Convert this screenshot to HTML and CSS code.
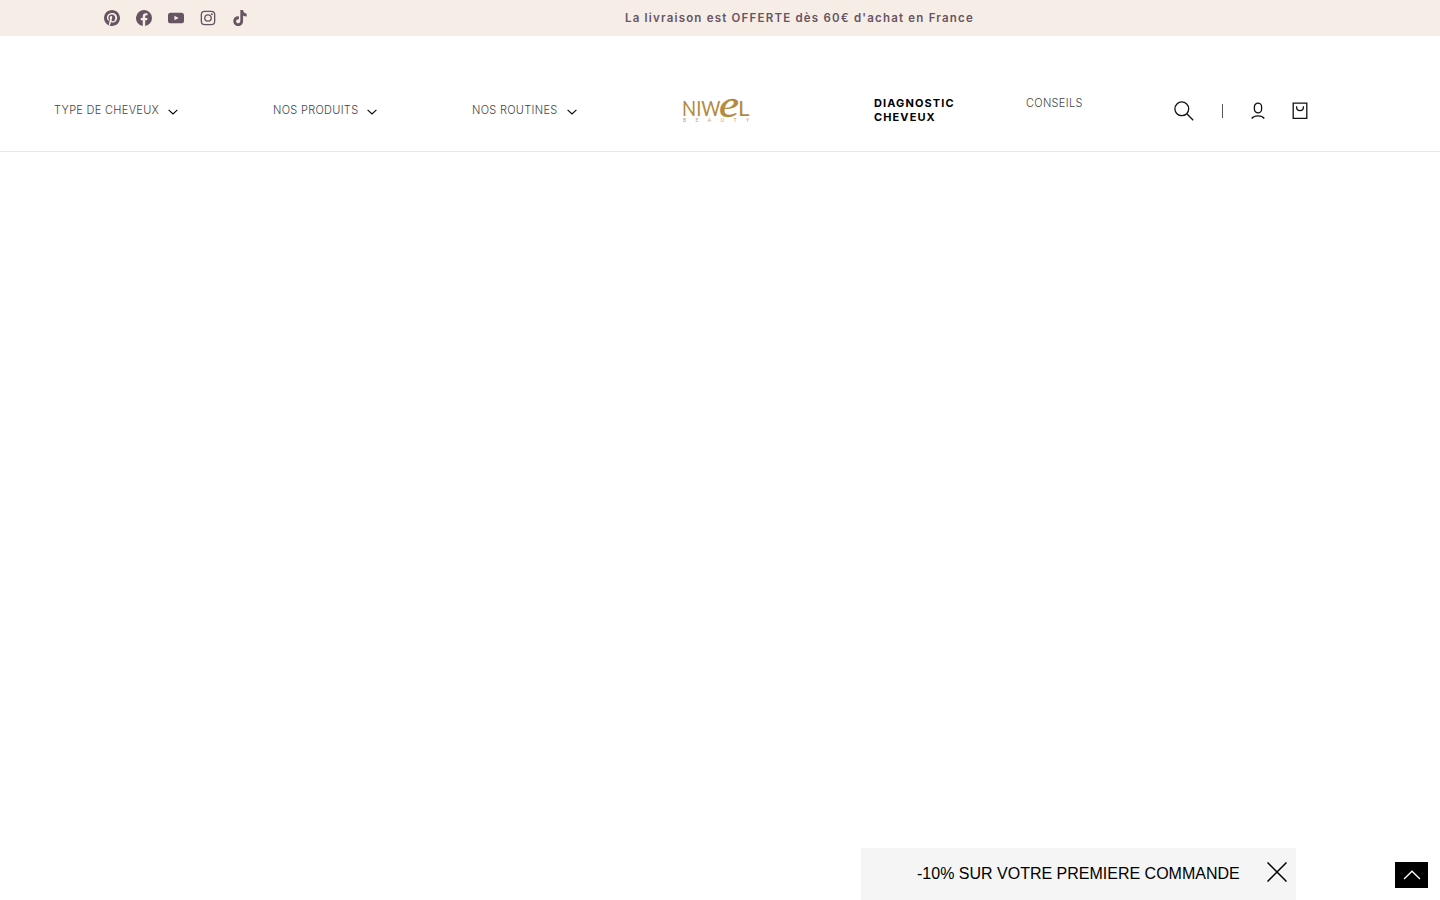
FILE: index.html
```html
<!DOCTYPE html>
<html lang="fr">
<head>
<meta charset="UTF-8">
<meta name="viewport" content="width=device-width, initial-scale=1.0">
<title>Niwel Beauty</title>
<link rel="stylesheet" href="styles.css">
</head>
<body>
  <div class="announcement-bar">
    <div class="social">
      <a href="#" aria-label="Pinterest"><svg viewBox="0 0 24 24"><path d="M12 0C5.4 0 0 5.4 0 12c0 5.1 3.200 9.400 7.600 11.200-.1-.9-.2-2.400 0-3.400l1.400-6s-.4-.7-.4-1.800c0-1.700 1-2.900 2.200-2.900 1 0 1.500.8 1.500 1.700 0 1-.7 2.600-1 4-.3 1.200.6 2.200 1.800 2.200 2.100 0 3.800-2.200 3.800-5.500 0-2.900-2.100-4.900-5-4.900-3.400 0-5.400 2.600-5.400 5.200 0 1 .4 2.100.9 2.700.1.100.1.200.1.300l-.3 1.400c-.1.200-.2.300-.4.200-1.500-.7-2.400-2.900-2.400-4.600 0-3.800 2.800-7.300 7.900-7.300 4.200 0 7.400 3 7.400 6.900 0 4.100-2.600 7.500-6.200 7.500-1.200 0-2.400-.6-2.800-1.400l-.7 2.900c-.3 1-1 2.300-1.500 3.100 1.100.3 2.300.5 3.500.5 6.600 0 12-5.400 12-12S18.600 0 12 0z"/></svg></a>
      <a href="#" aria-label="Facebook"><svg viewBox="0 0 24 24"><path d="M24 12a12 12 0 1 0-13.900 11.900v-8.400h-3V12h3V9.400c0-3 1.800-4.700 4.500-4.700 1.300 0 2.700.2 2.700.2v3h-1.500c-1.500 0-2 .9-2 1.900V12h3.400l-.6 3.500h-2.800v8.400A12 12 0 0 0 24 12z"/></svg></a>
      <a href="#" aria-label="YouTube"><svg viewBox="0 0 24 24"><path fill-rule="evenodd" d="M4 4h16c2.700 0 4 1.300 4 4v8c0 2.700-1.300 4-4 4H4c-2.700 0-4-1.300-4-4V8c0-2.700 1.300-4 4-4zm5.600 4.500v7L16 12z"/></svg></a>
      <a href="#" aria-label="Instagram"><svg viewBox="0 0 24 24"><g fill="none" stroke="currentColor" stroke-width="2"><rect x="2" y="2" width="20" height="20" rx="5"/><circle cx="12" cy="12" r="4.800"/></g><circle cx="17.800" cy="6.200" r="1.400"/></svg></a>
      <a href="#" aria-label="TikTok"><svg viewBox="0 0 24 24"><path d="M12.500 0h4.100c.3 3.200 2.300 5.300 5.400 5.600v4.200c-2 0-3.900-.6-5.400-1.700v8.300c0 4.600-3.200 7.600-7.300 7.600C5 24 2 20.700 2 16.800c0-4.500 3.700-7.700 8.400-7.200v4.300c-2.300-.6-4.200.7-4.200 2.800 0 1.800 1.400 3.100 3.100 3.100 2 0 3.200-1.300 3.200-3.600z"/></svg></a>
    </div>
    <p class="announcement">La livraison est OFFERTE dès 60€ d'achat en France</p>
  </div>

  <header class="header">
    <a class="menu-item" href="#"><span>TYPE DE CHEVEUX</span><svg class="caret" viewBox="0 0 10 6"><path d="M.6.8 5 5 9.400.8"/></svg></a>
    <a class="menu-item" href="#"><span>NOS PRODUITS</span><svg class="caret" viewBox="0 0 10 6"><path d="M.6.8 5 5 9.400.8"/></svg></a>
    <a class="menu-item" href="#"><span>NOS ROUTINES</span><svg class="caret" viewBox="0 0 10 6"><path d="M.6.8 5 5 9.400.8"/></svg></a>
    <a class="logo" href="#" aria-label="Niwel Beauty">
      <svg viewBox="0 0 66 26">
        <text class="logo-name" x="-1" y="18" textLength="38.500" lengthAdjust="spacingAndGlyphs">NIW</text>
        <text class="logo-e" x="36" y="18.500" textLength="20" lengthAdjust="spacingAndGlyphs">e</text>
        <text class="logo-name" x="55" y="18" textLength="11.500" lengthAdjust="spacingAndGlyphs">L</text>
        <text class="logo-sub" x="0" y="24" textLength="66">BEAUTY</text>
      </svg>
    </a>
    <a class="menu-link strong" href="#">DIAGNOSTIC<br>CHEVEUX</a>
    <a class="menu-link" href="#">CONSEILS</a>
    <div class="header-icons">
      <a href="#" aria-label="Recherche"><svg class="icon-search" viewBox="0 0 20 20"><circle cx="7.800" cy="7.800" r="6.900"/><path d="m12.800 12.800 6.400 6.400"/></svg></a>
      <span class="separator"></span>
      <a href="#" aria-label="Compte"><svg class="icon-account" viewBox="0 0 14 18"><rect x="3.400" y="1.200" width="7.200" height="9.600" rx="3.600"/><path d="M.7 16.500c1.400-1.700 3.600-2.600 6.300-2.600s4.900.9 6.300 2.600"/></svg></a>
      <a href="#" aria-label="Panier"><svg class="icon-cart" viewBox="0 0 16 18"><path d="M1.200 1.200h13.600v15.100H1.200zM4.600 4.200v1a3.400 3.400 0 0 0 6.800 0v-1"/></svg></a>
    </div>
  </header>

  <main></main>

  <div class="promo">
    <span>-10% SUR VOTRE PREMIERE COMMANDE</span>
    <button class="promo-close" aria-label="Fermer"><svg viewBox="0 0 20 20"><path d="m.5.5 19 19m0-19-19 19"/></svg></button>
  </div>
  <a class="back-to-top" href="#" aria-label="Haut de page"><svg viewBox="0 0 18 10"><path d="m1 9 8-7.800L17 9"/></svg></a>
</body>
</html>
```
FILE: styles.css
```css
* {
  box-sizing: border-box;
  margin: 0;
  padding: 0;
}
body {
  background: #fff;
  color: #121212;
  font-family: Inter, "Liberation Sans", sans-serif;
}
a {
  color: inherit;
  text-decoration: none;
}
svg {
  display: block;
}

.announcement-bar {
  display: flex;
  align-items: center;
  height: 36px;
  padding-left: 104px;
  background: #f5ede6;
  color: #675462;
}
.social {
  display: flex;
  gap: 16px;
  width: 521px;
}
.social svg {
  width: 16px;
  height: 16px;
  fill: currentColor;
}
.announcement {
  font-size: 11.500px;
  font-weight: 600;
  letter-spacing: 1.200px;
  line-height: 16px;
  white-space: nowrap;
}

.header {
  display: grid;
  grid-template-columns: 219px 199px 211px 191px 152px 148px auto;
  height: 116px;
  padding: 60px 0 0 54px;
  border-bottom: 1px solid #e8e8e8;
}
.menu-item,
.menu-link {
  height: 30px;
  color: #444;
  font-size: 11px;
  font-weight: 300;
  letter-spacing: .3px;
  line-height: 14px;
  white-space: nowrap;
}
.menu-item {
  display: flex;
  align-items: center;
  gap: 9px;
}
.menu-item span {
  margin-top: -2px;
}
.menu-link.strong {
  color: #000;
  font-weight: 700;
  letter-spacing: 1.100px;
}
.caret {
  width: 10px;
  height: 6px;
  margin-top: 2px;
  fill: none;
  stroke: #000;
  stroke-width: 1.100;
}
.logo svg {
  width: 66px;
  height: 26px;
  margin-top: 2px;
  overflow: visible;
}
.logo-name {
  fill: #b38a3e;
  font-family: Lato, sans-serif;
  font-size: 22px;
}
.logo-e {
  fill: #b38a3e;
  stroke: #b38a3e;
  stroke-width: .4;
  font-family: "Liberation Serif", serif;
  font-size: 37px;
  font-style: italic;
}
.logo-sub {
  fill: #c4a468;
  font-family: Lato, sans-serif;
  font-size: 5px;
}
.header-icons {
  display: flex;
  align-items: center;
  height: 30px;
}
.header-icons svg {
  fill: none;
  stroke: #121212;
  stroke-width: 1.300;
}
.icon-search {
  width: 20px;
  height: 20px;
}
.separator {
  width: 1px;
  height: 14px;
  margin: 0 28px;
  background: #555;
}
.icon-account {
  width: 14px;
  height: 18px;
}
.icon-cart {
  width: 16px;
  height: 18px;
  margin-left: 27px;
}

.promo {
  position: fixed;
  right: 144px;
  bottom: 0;
  display: flex;
  align-items: center;
  justify-content: space-between;
  width: 435px;
  height: 52px;
  padding: 0 9px 0 56px;
  background: #f5f5f5;
  color: #000;
  font-family: "Liberation Sans", Arial, sans-serif;
  font-size: 16px;
}
.promo-close {
  margin-bottom: 5px;
  border: none;
  background: none;
  cursor: pointer;
}
.promo-close svg {
  width: 20px;
  height: 20px;
  fill: none;
  stroke: #000;
  stroke-width: 1.500;
}
.back-to-top {
  position: fixed;
  right: 12px;
  bottom: 12px;
  display: flex;
  align-items: center;
  justify-content: center;
  width: 33px;
  height: 26px;
  background: #000;
}
.back-to-top svg {
  width: 18px;
  height: 10px;
  fill: none;
  stroke: #fff;
  stroke-width: 1.300;
}
```
